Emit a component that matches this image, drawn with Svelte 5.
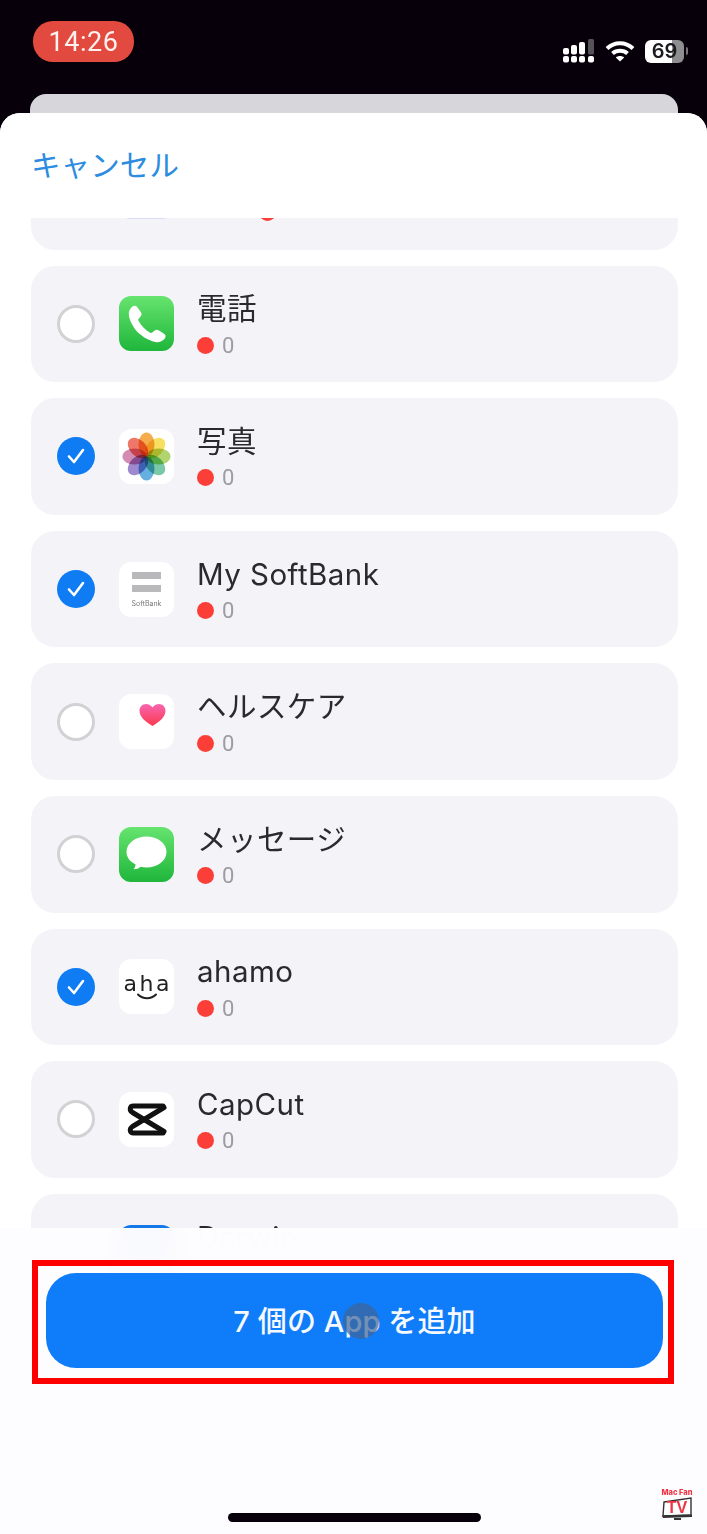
<script>
  const apps = [
    { name: '電話', icon: 'phone', checked: false },
    { name: '写真', icon: 'photos', checked: true },
    { name: 'My SoftBank', icon: 'softbank', checked: true },
    { name: 'ヘルスケア', icon: 'health', checked: false },
    { name: 'メッセージ', icon: 'messages', checked: false },
    { name: 'ahamo', icon: 'ahamo', checked: true },
    { name: 'CapCut', icon: 'capcut', checked: false },
    { name: 'Darwin', icon: 'blue', checked: false }
  ];

  const petals = ['#f4a53d', '#f6dc55', '#a9d062', '#6ec4a2', '#58a9dd', '#967fca', '#cf80ac', '#ee6b5c'];
</script>

<div class="screen">
  <div class="status-bar">
    <div class="time">14:26</div>
    <div class="status-right">
      <svg class="signal" width="32" height="24" viewBox="0 0 32 24" fill="#fff">
        <rect x="0" y="9" width="6" height="6.500" rx="2"/>
        <rect x="8" y="6" width="6" height="9.500" rx="2"/>
        <rect x="16" y="3" width="6" height="12.500" rx="2"/>
        <rect x="25" y="0" width="6" height="15.500" rx="1.500" fill="#55525a"/>
        <rect x="0" y="17" width="6" height="6.500" rx="2"/>
        <rect x="8" y="17" width="6" height="6.500" rx="2"/>
        <rect x="16" y="17" width="6" height="6.500" rx="2"/>
        <rect x="25" y="17" width="6" height="6.500" rx="2"/>
      </svg>
      <svg class="wifi" width="30" height="22" viewBox="0 0 30 22" fill="none" stroke="#fff" stroke-width="4">
        <path d="M2 8.500C9.500 1.500 20.500 1.500 28 8.500"/>
        <path d="M7.500 13.500C11.500 9.800 18.500 9.800 22.500 13.500"/>
        <path d="M15 21.500L10.800 17.500C13 15.500 17 15.500 19.200 17.500Z" fill="#fff" stroke="none"/>
      </svg>
      <div class="battery"><span>69</span></div>
      <div class="battery-nub"></div>
    </div>
  </div>

  <div class="sheet-back"></div>

  <div class="sheet">
    <header class="sheet-header">
      <span class="cancel">キャンセル</span>
    </header>

    <div class="list">
      <div class="card card-clipped">
        <div class="radio"></div>
        <div class="app-icon icon-lavender"></div>
        <div class="card-text">
          <div class="app-name">&nbsp;</div>
          <div class="app-sub clipped-sub"><i class="dot"></i></div>
        </div>
      </div>

      {#each apps as app}
        <div class="card">
          {#if app.checked}
            <div class="radio checked">
              <svg width="20" height="20" viewBox="0 0 20 20" fill="none" stroke="#fff" stroke-width="2.600" stroke-linecap="round" stroke-linejoin="round">
                <path d="M3 10.500L8 16L17 4"/>
              </svg>
            </div>
          {:else}
            <div class="radio"></div>
          {/if}

          {#if app.icon === 'phone'}
            <div class="app-icon icon-green">
              <svg width="55" height="55" viewBox="0 0 55 55">
                <path fill="#fff" d="M13 11c1.500-1.500 3.800-1.700 5-.2l3.900 5.400c1 1.400.8 3-.3 4.300l-2 2.300c-.5.600-.5 1.300-.1 2 2.600 5 6.700 9.300 11.800 12 .7.400 1.400.3 2-.2l2.300-2c1.300-1.100 3-1.200 4.400-.2l5.400 3.700c1.600 1.100 1.500 3.500 0 5-2.400 2.500-5.500 3.800-9 3-8-1.800-15.700-7-20.300-12.800C12 27 9.500 21.500 9.800 17c.2-2.300 1.500-4.300 3.200-6z"/>
              </svg>
            </div>
          {:else if app.icon === 'photos'}
            <div class="app-icon icon-white">
              <svg width="55" height="55" viewBox="0 0 55 55">
                {#each petals as color, i}
                  <ellipse cx="27.500" cy="15.500" rx="8" ry="12" fill={color} fill-opacity="0.92" class="petal" transform="rotate({i * 45} 27.500 27.500)"/>
                {/each}
              </svg>
            </div>
          {:else if app.icon === 'softbank'}
            <div class="app-icon icon-white softbank">
              <span class="bar"></span>
              <span class="bar"></span>
              <span class="sb-label">SoftBank</span>
            </div>
          {:else if app.icon === 'health'}
            <div class="app-icon icon-white">
              <svg width="55" height="55" viewBox="0 0 55 55">
                <defs>
                  <linearGradient id="heart" x1="0" y1="0" x2="0" y2="1">
                    <stop offset="0" stop-color="#f765b0"/>
                    <stop offset="1" stop-color="#fb3a4e"/>
                  </linearGradient>
                </defs>
                <path fill="url(#heart)" d="M33.500 32C26 27.500 20.500 23 20.500 16.800c0-3.900 2.900-6.800 6.500-6.800 2.700 0 5 1.300 6.500 3.500 1.500-2.200 3.800-3.500 6.500-3.500 3.600 0 6.500 2.900 6.500 6.800 0 6.200-5.500 10.700-13 15.200z"/>
              </svg>
            </div>
          {:else if app.icon === 'messages'}
            <div class="app-icon icon-green">
              <svg width="55" height="55" viewBox="0 0 55 55">
                <path fill="#fff" d="M27.500 9.500c11 0 20 6.700 20 15.500s-9 15.500-20 15.500c-2 0-4-.2-5.800-.7-2 1.800-4.500 2.600-7.200 2.500 1.200-1.200 2-3 2-5.100C11 34.800 7.500 30.300 7.500 25c0-8.800 9-15.500 20-15.500z"/>
              </svg>
            </div>
          {:else if app.icon === 'ahamo'}
            <div class="app-icon icon-white ahamo">
              <span class="aha-text">aha</span>
              <svg class="smile" width="24" height="8" viewBox="0 0 24 8" fill="none" stroke="#222" stroke-width="2" stroke-linecap="round">
                <path d="M3 1.500C8 6.500 16 6.500 21 1.500"/>
              </svg>
            </div>
          {:else if app.icon === 'capcut'}
            <div class="app-icon icon-white">
              <svg width="55" height="55" viewBox="0 0 55 55" fill="none" stroke="#111" stroke-width="5" stroke-linejoin="round" stroke-linecap="round">
                <path d="M45 15.500L13.500 34.500C10 36.800 10.800 41 14.500 41H44"/>
                <path d="M45 39.500L13.500 20.500C10 18.200 10.800 14 14.500 14H44"/>
              </svg>
            </div>
          {:else}
            <div class="app-icon icon-blue"></div>
          {/if}

          <div class="card-text">
            <div class="app-name">{app.name}</div>
            <div class="app-sub"><i class="dot"></i><span>0</span></div>
          </div>
        </div>
      {/each}
    </div>

    <footer class="sheet-footer">
      <div class="highlight">
        <button class="add-btn">
          7 個の App を追加
          <span class="touch"></span>
        </button>
      </div>
      <div class="home-indicator"></div>
    </footer>

    <div class="watermark">
      <div class="wm-name">Mac Fan</div>
      <svg width="32" height="24" viewBox="0 0 32 24">
        <path d="M3 5L30 1V18L2 19Z" fill="#fff" stroke="#333" stroke-width="1.400"/>
        <path d="M1 18.500L31 17.500V20L2 21Z M13 21H20V23H13Z" fill="#333"/>
        <text x="16" y="16" text-anchor="middle" class="wm-tv">TV</text>
      </svg>
    </div>
  </div>
</div>

<style>
  :global(body) {
    margin: 0;
    background: #07000a;
  }

  .screen {
    width: 707px;
    height: 1534px;
    display: flex;
    flex-direction: column;
    overflow: hidden;
    background: #07000a;
    font-family: Inter, "Noto Sans CJK JP", sans-serif;
  }

  .status-bar {
    height: 94px;
    box-sizing: border-box;
    padding: 21px 19px 0 33px;
    display: flex;
    align-items: flex-start;
    justify-content: space-between;
  }

  .time {
    width: 101px;
    height: 41px;
    border-radius: 20px;
    background: #e24a3f;
    color: #fdf1ef;
    font-family: Roboto, sans-serif;
    font-size: 27px;
    letter-spacing: 0.6px;
    display: flex;
    align-items: center;
    justify-content: center;
  }

  .status-right {
    display: flex;
    align-items: center;
    margin-top: 18px;
  }

  .wifi {
    margin-left: 10px;
  }

  .battery {
    width: 39px;
    height: 23px;
    margin-left: 10px;
    border-radius: 6px;
    background: linear-gradient(90deg, #fff 69%, #8e8d90 69%);
    color: #1c1a1e;
    font-size: 20px;
    font-weight: 600;
    line-height: 23px;
    text-align: center;
  }

  .battery-nub {
    width: 2px;
    height: 8px;
    margin-left: 2px;
    border-radius: 0 2px 2px 0;
    background: #77757a;
  }

  .sheet-back {
    height: 19px;
    margin: 0 29px 0 30px;
    border-radius: 16px 16px 0 0;
    background: #d6d6db;
  }

  .sheet {
    position: relative;
    flex: 1;
    display: flex;
    flex-direction: column;
    min-height: 0;
    border-radius: 20px 20px 0 0;
    background: #fff;
    overflow: hidden;
  }

  .sheet-header {
    height: 105px;
    box-sizing: border-box;
    flex-shrink: 0;
    padding: 31px 31px 0;
    background: #fff;
    position: relative;
    z-index: 1;
  }

  .cancel {
    font-size: 29.500px;
    line-height: 42px;
    letter-spacing: 0.1px;
    color: #2c8ce0;
  }

  .list {
    flex: 1;
    min-height: 0;
    overflow: hidden;
    display: flex;
    flex-direction: column;
    gap: 16px;
    padding: 0 29px 0 31px;
  }

  .card {
    flex-shrink: 0;
    height: 116.600px;
    box-sizing: border-box;
    padding: 0 0 0 26px;
    display: flex;
    align-items: center;
    border-radius: 24px;
    background: #f3f3f8;
  }

  .card-clipped {
    margin-top: -85px;
  }

  .radio {
    width: 38px;
    height: 38px;
    box-sizing: border-box;
    flex-shrink: 0;
    border-radius: 50%;
    border: 3px solid #d2d2d5;
    background: #fff;
    display: flex;
    align-items: center;
    justify-content: center;
  }

  .radio.checked {
    border: none;
    background: #0f7cf4;
  }

  .app-icon {
    width: 55px;
    height: 55px;
    margin-left: 24px;
    flex-shrink: 0;
    border-radius: 12px;
    overflow: hidden;
    display: flex;
    flex-direction: column;
    align-items: center;
    justify-content: center;
  }

  .icon-green {
    background: linear-gradient(180deg, #66e46f, #1fb63b);
  }

  .icon-white {
    background: #fff;
  }

  .icon-blue {
    background: #1478e6;
  }

  .icon-lavender {
    background: #d8dcf6;
  }

  .petal {
    mix-blend-mode: multiply;
  }

  .softbank {
    gap: 6px;
  }

  .bar {
    width: 29px;
    height: 7px;
    background: #b9b9bc;
  }

  .sb-label {
    font-size: 7px;
    line-height: 7px;
    color: #777;
    margin-top: 2px;
  }

  .aha-text {
    font-family: "DejaVu Sans", sans-serif;
    font-size: 22px;
    line-height: 19px;
    letter-spacing: 2.5px;
    margin-right: -2.5px;
    color: #222;
    margin-top: 2px;
  }

  .smile {
    margin-top: 0;
  }

  .card-text {
    margin-left: 23px;
    display: flex;
    flex-direction: column;
    margin-top: 1px;
  }

  .app-name {
    font-size: 29.500px;
    line-height: 36px;
    letter-spacing: 0.45px;
    color: #2a2a2e;
    white-space: nowrap;
  }

  .app-sub {
    display: flex;
    align-items: center;
    gap: 8px;
    height: 26px;
    margin-top: 6px;
    font-family: Roboto, sans-serif;
    font-size: 22px;
    color: #9c9ca2;
  }

  .clipped-sub {
    padding-left: 62px;
  }

  .dot {
    width: 17px;
    height: 17px;
    border-radius: 50%;
    background: #fb3f38;
  }

  .sheet-footer {
    position: absolute;
    left: 0;
    right: 0;
    bottom: 0;
    height: 306px;
    box-sizing: border-box;
    padding: 32px 33px 12px 32px;
    display: flex;
    flex-direction: column;
    background: rgba(253, 252, 254, 0.985);
    backdrop-filter: blur(16px);
  }

  .highlight {
    box-sizing: border-box;
    height: 124px;
    padding: 7px 5px 8px 8px;
    border: 6px solid #f00;
  }

  .add-btn {
    position: relative;
    width: 100%;
    height: 95px;
    padding: 0 0 3px;
    border: none;
    border-radius: 30px;
    background: #0f7dfa;
    color: #f6f9ff;
    font-family: Inter, "Noto Sans CJK JP", sans-serif;
    font-size: 29px;
    font-weight: 500;
    letter-spacing: 0.1px;
  }

  .touch {
    position: absolute;
    left: 297px;
    top: 30px;
    width: 36px;
    height: 36px;
    border-radius: 50%;
    background: #3f6496;
    opacity: 0.7;
  }

  .home-indicator {
    width: 253px;
    height: 9px;
    margin: auto 0 0 196px;
    border-radius: 5px;
    background: #07000a;
  }

  .watermark {
    position: absolute;
    right: 14px;
    bottom: 13px;
    width: 32px;
    display: flex;
    flex-direction: column;
    align-items: center;
  }

  .wm-name {
    font-size: 7.500px;
    line-height: 8px;
    font-weight: 800;
    color: #ee3344;
    white-space: nowrap;
  }

  .wm-tv {
    font-family: "Liberation Sans", sans-serif;
    font-size: 16px;
    font-weight: 700;
    fill: #ee3344;
  }
</style>
